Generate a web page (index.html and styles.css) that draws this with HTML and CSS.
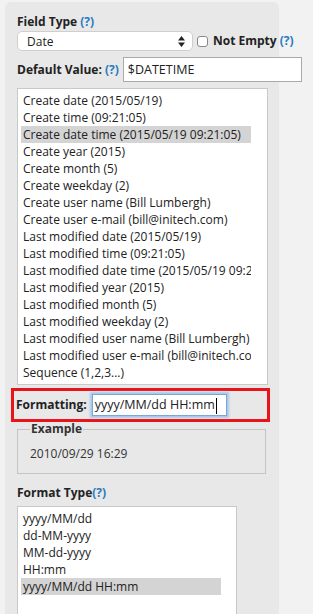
FILE: index.html
```html
<!DOCTYPE html>
<html lang="en">
<head>
  <meta charset="UTF-8">
  <title>Field options</title>
  <link rel="stylesheet" href="styles.css">
</head>
<body>
  <div class="panel">
    <div class="label">Field Type <a class="help">(?)</a></div>
    <div class="type-row">
      <div class="select">
        <span>Date</span>
        <svg width="7" height="11" viewBox="0 0 7 11"><path d="M3.5 0L7 4.5H0z M3.5 11L0 6.5H7z" fill="#222"/></svg>
      </div>
      <span class="check"></span>
      <span class="label">Not Empty <a class="help">(?)</a></span>
    </div>
    <div class="default-row">
      <span class="label">Default Value: <a class="help">(?)</a></span>
      <div class="text-input wide">$DATETIME</div>
    </div>
    <div class="listbox main-list">
      <div class="item">Create date (2015/05/19)</div>
      <div class="item">Create time (09:21:05)</div>
      <div class="item selected">Create date time (2015/05/19 09:21:05)</div>
      <div class="item">Create year (2015)</div>
      <div class="item">Create month (5)</div>
      <div class="item">Create weekday (2)</div>
      <div class="item">Create user name (Bill Lumbergh)</div>
      <div class="item">Create user e-mail (bill@initech.com)</div>
      <div class="item">Last modified date (2015/05/19)</div>
      <div class="item">Last modified time (09:21:05)</div>
      <div class="item">Last modified date time (2015/05/19 09:21:05)</div>
      <div class="item">Last modified year (2015)</div>
      <div class="item">Last modified month (5)</div>
      <div class="item">Last modified weekday (2)</div>
      <div class="item">Last modified user name (Bill Lumbergh)</div>
      <div class="item">Last modified user e-mail (bill@initech.com)</div>
      <div class="item">Sequence (1,2,3...)</div>
    </div>
    <div class="formatting">
      <span class="label">Formatting:</span>
      <div class="text-input focused">yyyy/MM/dd HH:mm<span class="caret"></span></div>
    </div>
    <fieldset class="example">
      <legend>Example</legend>
      <div class="example-value">2010/09/29 16:29</div>
    </fieldset>
    <div class="label format-label">Format Type<a class="help">(?)</a></div>
    <div class="listbox format-list">
      <div class="item">yyyy/MM/dd</div>
      <div class="item">dd-MM-yyyy</div>
      <div class="item">MM-dd-yyyy</div>
      <div class="item">HH:mm</div>
      <div class="item selected">yyyy/MM/dd HH:mm</div>
    </div>
  </div>
</body>
</html>
```

FILE: styles.css
```css
* {
  margin: 0;
  padding: 0;
  box-sizing: border-box;
}

body {
  background-color: #f2f2f2;
  font-family: "Open Sans", Arial, sans-serif;
  font-size: 12px;
  color: #222;
  overflow: hidden;
}

.panel {
  width: 274px;
  height: 620px;
  margin: 2px 0 0 5px;
  padding: 11px 0 0 12px;
  background-color: #e8e8e8;
  border-top-left-radius: 6px;
  border-top-right-radius: 6px;
}

.label {
  font-size: 12px;
  font-weight: 700;
  color: #222;
  line-height: 18px;
  white-space: nowrap;
}

.help {
  color: #2a7bc0;
  font-weight: 700;
}

.type-row {
  display: flex;
  align-items: center;
}

.select {
  width: 176px;
  height: 20px;
  flex-shrink: 0;
  display: flex;
  align-items: center;
  justify-content: space-between;
  padding: 0 7px 0 9px;
  background-color: #fff;
  border: 1px solid #cfcfcf;
  border-radius: 5px;
}

.check {
  width: 11px;
  height: 11px;
  flex-shrink: 0;
  margin: 0 5px 0 4px;
  background-color: #fff;
  border: 1px solid #8a8a8a;
  border-radius: 3px;
}

.default-row {
  display: flex;
  align-items: center;
  margin-top: 6px;
  gap: 4px;
}

.text-input {
  height: 25px;
  flex-shrink: 0;
  padding: 0 4px;
  line-height: 23px;
  background-color: #fff;
  border: 1px solid #aaa;
  white-space: nowrap;
}

.text-input.wide {
  width: 179px;
  font-size: 12.5px;
}

.listbox {
  background-color: #fff;
  border: 1px solid #c9c9c9;
  padding: 3px 3px 0 3px;
  overflow: hidden;
}

.main-list {
  width: 251px;
  height: 297px;
  margin-top: 6px;
}

.item {
  height: 17px;
  line-height: 17px;
  padding-left: 2px;
  white-space: nowrap;
  overflow: hidden;
}

.item.selected {
  background-color: #d4d4d4;
}

.main-list .item {
  width: 230px;
}

.formatting {
  width: 259px;
  height: 34px;
  margin: 3px 0 0 -6px;
  padding: 0 0 0 2px;
  display: flex;
  align-items: center;
  gap: 5px;
  border: 3px solid #e8141b;
}

.text-input.focused {
  width: 135px;
  height: 22px;
  line-height: 20px;
  padding: 0 2px;
  font-size: 12.5px;
  border: 1px solid #7aa7d6;
  box-shadow: 0 0 2px 2px #a6c8ec;
}

.caret {
  display: inline-block;
  width: 1px;
  height: 16px;
  margin-left: 1px;
  vertical-align: middle;
  background-color: #000;
}

.example {
  width: 249px;
  height: 52px;
  margin-top: 0;
  padding: 0 12px;
  border: 1px solid #c4c4c4;
}

.example legend {
  padding: 0 1px;
  font-size: 12px;
  font-weight: 700;
  color: #333;
  line-height: 14px;
}

.example-value {
  margin-top: 9px;
  color: #333;
}

.format-label {
  margin-top: 10px;
}

.format-list {
  width: 220px;
  height: 120px;
  margin-top: 4px;
}

.format-list .item.selected {
  width: 200px;
}
```
